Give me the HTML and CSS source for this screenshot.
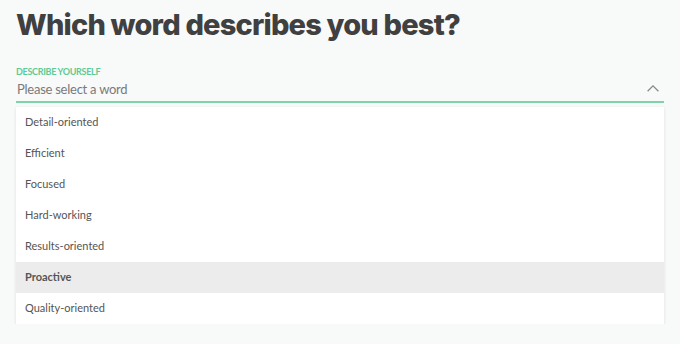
FILE: index.html
```html
<!DOCTYPE html>
<html>
<head>
<meta charset="utf-8">
<link rel="stylesheet" href="styles.css">
</head>
<body>
<div class="page">
  <h1 class="title">Which word describes you best?</h1>
  <div class="field">
    <label class="label">DESCRIBE YOURSELF</label>
    <div class="control">
      <span class="placeholder">Please select a word</span>
      <svg class="chev" width="12" height="7" viewBox="0 0 12 7"><path d="M0.6 6.2 L6 0.9 L11.4 6.2" fill="none" stroke="#8a8a8a" stroke-width="1.3"/></svg>
    </div>
    <ul class="menu">
      <li class="item">Detail-oriented</li>
      <li class="item">Efficient</li>
      <li class="item">Focused</li>
      <li class="item">Hard-working</li>
      <li class="item">Results-oriented</li>
      <li class="item active">Proactive</li>
      <li class="item">Quality-oriented</li>
    </ul>
  </div>
</div>
</body>
</html>
```
FILE: styles.css
```css
html, body {
  margin: 0;
  padding: 0;
  background: #f8f9f9;
}
.page {
  padding: 6px 16px 0 16px;
  font-family: Lato, "Noto Sans", sans-serif;
}
.title {
  margin: 0;
  font-family: Inter, "Open Sans", sans-serif;
  font-weight: 800;
  font-size: 29px;
  line-height: 38px;
  color: #404040;
  letter-spacing: -0.8px;
}
.field {
  margin-top: 22px;
}
.label {
  display: block;
  font-size: 9px;
  font-weight: 700;
  color: #5ccb95;
  line-height: 11px;
  letter-spacing: -0.3px;
}
.control {
  display: flex;
  align-items: center;
  justify-content: space-between;
  height: 24px;
  border-bottom: 2px solid #7fd3a8;
  padding: 0 5px 0 1px;
}
.placeholder {
  font-size: 13px;
  color: #7a7a7a;
  letter-spacing: -0.25px;
}
.chev {
  margin-top: -2px;
}
.menu {
  list-style: none;
  margin: 4px 0 0 0;
  padding: 0;
  background: #fff;
  box-shadow: 0 1px 3px rgba(0,0,0,0.12);
}
.item {
  height: 31px;
  line-height: 29px;
  padding-left: 9px;
  font-size: 11px;
  color: #555;
}
.item.active {
  background: #ececec;
  font-weight: 700;
}
```
